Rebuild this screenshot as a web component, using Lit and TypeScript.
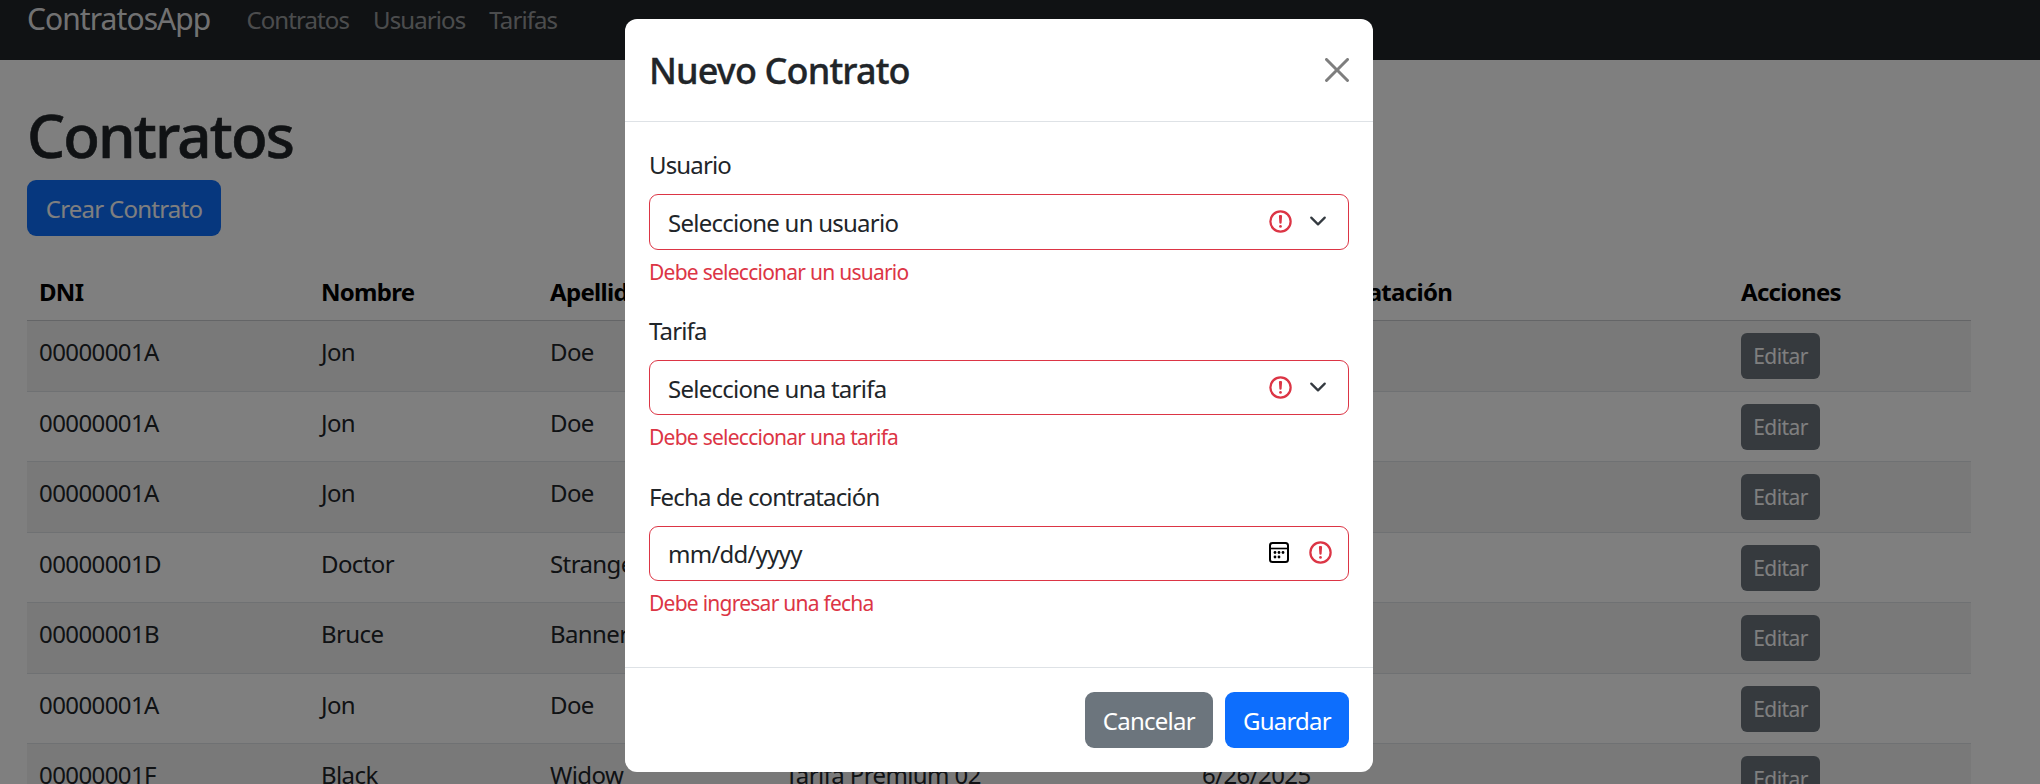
import { LitElement, html, css, svg } from "lit";
import { customElement } from "lit/decorators.js";

const rows = [
  ["00000001A", "Jon", "Doe", "Tarifa Básica 01", "6/20/2025"],
  ["00000001A", "Jon", "Doe", "Tarifa Básica 01", "6/21/2025"],
  ["00000001A", "Jon", "Doe", "Tarifa Básica 01", "6/22/2025"],
  ["00000001D", "Doctor", "Strange", "Tarifa Premium 01", "6/23/2025"],
  ["00000001B", "Bruce", "Banner", "Tarifa Premium 01", "6/24/2025"],
  ["00000001A", "Jon", "Doe", "Tarifa Básica 01", "6/25/2025"],
  ["00000001F", "Black", "Widow", "Tarifa Premium 02", "6/26/2025"],
];

const alertIcon = svg`<svg class="alert" viewBox="0 0 12 12" fill="none" stroke="#dc3545">
  <circle cx="6" cy="6" r="4.5"></circle>
  <path stroke-linejoin="round" d="M5.8 3.6h.4L6 6.5z"></path>
  <circle cx="6" cy="8.2" r=".6" fill="#dc3545" stroke="none"></circle>
</svg>`;

const chevronIcon = svg`<svg class="chevron" viewBox="0 0 16 16" fill="none" stroke="#343a40" stroke-width="2" stroke-linecap="round" stroke-linejoin="round">
  <path d="M2 5l6 6 6-6"></path>
</svg>`;

const calendarIcon = svg`<svg class="calendar" viewBox="0 0 20 21" fill="none" stroke="#000">
  <rect x="1" y="1" width="18" height="19" rx="2.5" stroke-width="2"></rect>
  <path d="M1 6.5h18" stroke-width="1.6"></path>
  <g fill="#000" stroke="none">
    <circle cx="6" cy="10.5" r="1.4"></circle>
    <circle cx="10" cy="10.5" r="1.4"></circle>
    <circle cx="14" cy="10.5" r="1.4"></circle>
    <circle cx="6" cy="15" r="1.4"></circle>
    <circle cx="10" cy="15" r="1.4"></circle>
  </g>
</svg>`;

@customElement("app-root")
export class AppRoot extends LitElement {
  static styles = css`
    :host {
      display: block;
      position: relative;
      height: 784px;
      overflow: hidden;
      background: #fff;
      color: #212529;
      font-family: "Noto Sans", "Open Sans", sans-serif;
      font-size: 24px;
      line-height: 36px;
      letter-spacing: -0.75px;
    }

    * {
      box-sizing: border-box;
    }

    nav {
      height: 60px;
      padding: 0 27px;
      background: #212529;
      display: flex;
      align-items: flex-start;
    }

    .brand {
      font-size: 30px;
      line-height: 38px;
      letter-spacing: -0.93px;
      color: rgba(255, 255, 255, 0.9);
      margin-right: 24px;
    }

    .nav-link {
      padding: 2px 12px;
      letter-spacing: -0.9px;
      color: rgba(255, 255, 255, 0.55);
    }

    main {
      padding: 36px 69px 0 27px;
    }

    h1 {
      margin: 0 0 12px;
      padding-top: 3px;
      height: 72px;
      font-size: 60px;
      line-height: 72px;
      font-weight: 500;
      letter-spacing: -1.85px;
      -webkit-text-stroke: 0.6px currentColor;
    }

    .btn {
      display: inline-flex;
      align-items: center;
      justify-content: center;
      height: 56px;
      padding: 2px 18px 0;
      border-radius: 9px;
      color: #fff;
    }

    .primary {
      background: #0d6efd;
    }

    .secondary {
      background: #6c757d;
    }

    .create {
      width: 194px;
      margin-bottom: 23px;
      padding: 2px 0 0;
    }

    .row {
      display: grid;
      grid-template-columns: 282px 229px 235px 417px 539px 242px;
      border-bottom: 1px solid #dee2e6;
      height: 70.5px;
      padding-top: 12px;
      letter-spacing: -0.6px;
    }

    .row.head {
      height: 62px;
      font-weight: 700;
      letter-spacing: -0.7px;
      border-bottom-color: #c8cbcf;
    }

    .row.odd {
      background: rgba(0, 0, 0, 0.05);
    }

    .cell {
      padding: 1px 12px 0;
      color: #212529;
    }

    .head .cell {
      padding-top: 3px;
      color: #000;
    }

    .cell.actions {
      padding-top: 0;
    }

    .edit {
      display: flex;
      align-items: center;
      justify-content: center;
      width: 79px;
      height: 46px;
      border-radius: 6px;
      background: #6c757d;
      color: #fff;
      font-size: 21px;
    }

    .backdrop {
      position: absolute;
      inset: 0;
      background: rgba(0, 0, 0, 0.5);
    }

    .modal {
      position: absolute;
      left: 625px;
      top: 19px;
      width: 748px;
      height: 753px;
      background: #fff;
      border-radius: 12px;
      display: flex;
      flex-direction: column;
    }

    .modal-header {
      height: 103px;
      padding: 0 24px;
      display: flex;
      align-items: center;
      justify-content: space-between;
      border-bottom: 1px solid #dee2e6;
    }

    .modal-title {
      padding-top: 1px;
      font-size: 36px;
      line-height: 45px;
      font-weight: 500;
      letter-spacing: -0.87px;
      -webkit-text-stroke: 0.35px currentColor;
    }

    .close {
      width: 24px;
      height: 24px;
      opacity: 0.5;
      display: block;
    }

    .modal-body {
      padding: 24px 24px 0;
      height: 545px;
    }

    .group {
      margin-bottom: 24.75px;
    }

    .group label {
      display: block;
      height: 36px;
      padding-top: 1px;
      margin-bottom: 12px;
      letter-spacing: -0.85px;
    }

    .control {
      height: 55.5px;
      border: 1px solid #dc3545;
      border-radius: 9px;
      display: flex;
      align-items: center;
      padding: 1px 18px 0;
    }

    .control .value {
      flex: 1;
      padding-top: 1px;
    }

    .date .value {
      padding-top: 0;
    }

    .alert {
      width: 27px;
      height: 27px;
      display: block;
      margin-top: -1px;
    }

    .chevron {
      width: 18px;
      height: 18px;
      margin: -2px 3px 0 15.5px;
      display: block;
    }

    .calendar {
      width: 20px;
      height: 21px;
      margin-right: 18px;
      margin-top: -2px;
      display: block;
    }

    .date .alert {
      margin-right: -4px;
      margin-top: -2px;
    }

    .error {
      margin-top: 6px;
      padding-top: 1px;
      height: 31.5px;
      font-size: 21px;
      line-height: 31px;
      color: #dc3545;
    }

    .modal-footer {
      flex: 1;
      padding: 24px;
      border-top: 1px solid #dee2e6;
      display: flex;
      justify-content: flex-end;
      gap: 12px;
    }
  `;

  field(label: string, value: string, error: string) {
    return html`
      <div class="group">
        <label>${label}</label>
        <div class="control">
          <span class="value">${value}</span>
          ${alertIcon}${chevronIcon}
        </div>
        <div class="error">${error}</div>
      </div>
    `;
  }

  render() {
    return html`
      <nav>
        <span class="brand">ContratosApp</span>
        <span class="nav-link">Contratos</span>
        <span class="nav-link">Usuarios</span>
        <span class="nav-link">Tarifas</span>
      </nav>
      <main>
        <h1>Contratos</h1>
        <div class="btn primary create">Crear Contrato</div>
        <div class="row head">
          <div class="cell">DNI</div>
          <div class="cell">Nombre</div>
          <div class="cell">Apellidos</div>
          <div class="cell">Tarifa</div>
          <div class="cell">Fecha de contratación</div>
          <div class="cell">Acciones</div>
        </div>
        ${rows.map(
          (r, i) => html`
            <div class="row ${i % 2 === 0 ? "odd" : ""}">
              ${r.map((c) => html`<div class="cell">${c}</div>`)}
              <div class="cell actions"><div class="edit">Editar</div></div>
            </div>
          `
        )}
      </main>
      <div class="backdrop"></div>
      <div class="modal">
        <div class="modal-header">
          <span class="modal-title">Nuevo Contrato</span>
          <svg class="close" viewBox="0 0 16 16" fill="#000">
            <path d="M.293.293a1 1 0 0 1 1.414 0L8 6.586 14.293.293a1 1 0 1 1 1.414 1.414L9.414 8l6.293 6.293a1 1 0 0 1-1.414 1.414L8 9.414l-6.293 6.293a1 1 0 0 1-1.414-1.414L6.586 8 .293 1.707a1 1 0 0 1 0-1.414z"></path>
          </svg>
        </div>
        <div class="modal-body">
          ${this.field("Usuario", "Seleccione un usuario", "Debe seleccionar un usuario")}
          ${this.field("Tarifa", "Seleccione una tarifa", "Debe seleccionar una tarifa")}
          <div class="group">
            <label>Fecha de contratación</label>
            <div class="control date">
              <span class="value">mm/dd/yyyy</span>
              ${calendarIcon}${alertIcon}
            </div>
            <div class="error">Debe ingresar una fecha</div>
          </div>
        </div>
        <div class="modal-footer">
          <div class="btn secondary">Cancelar</div>
          <div class="btn primary">Guardar</div>
        </div>
      </div>
    `;
  }
}
